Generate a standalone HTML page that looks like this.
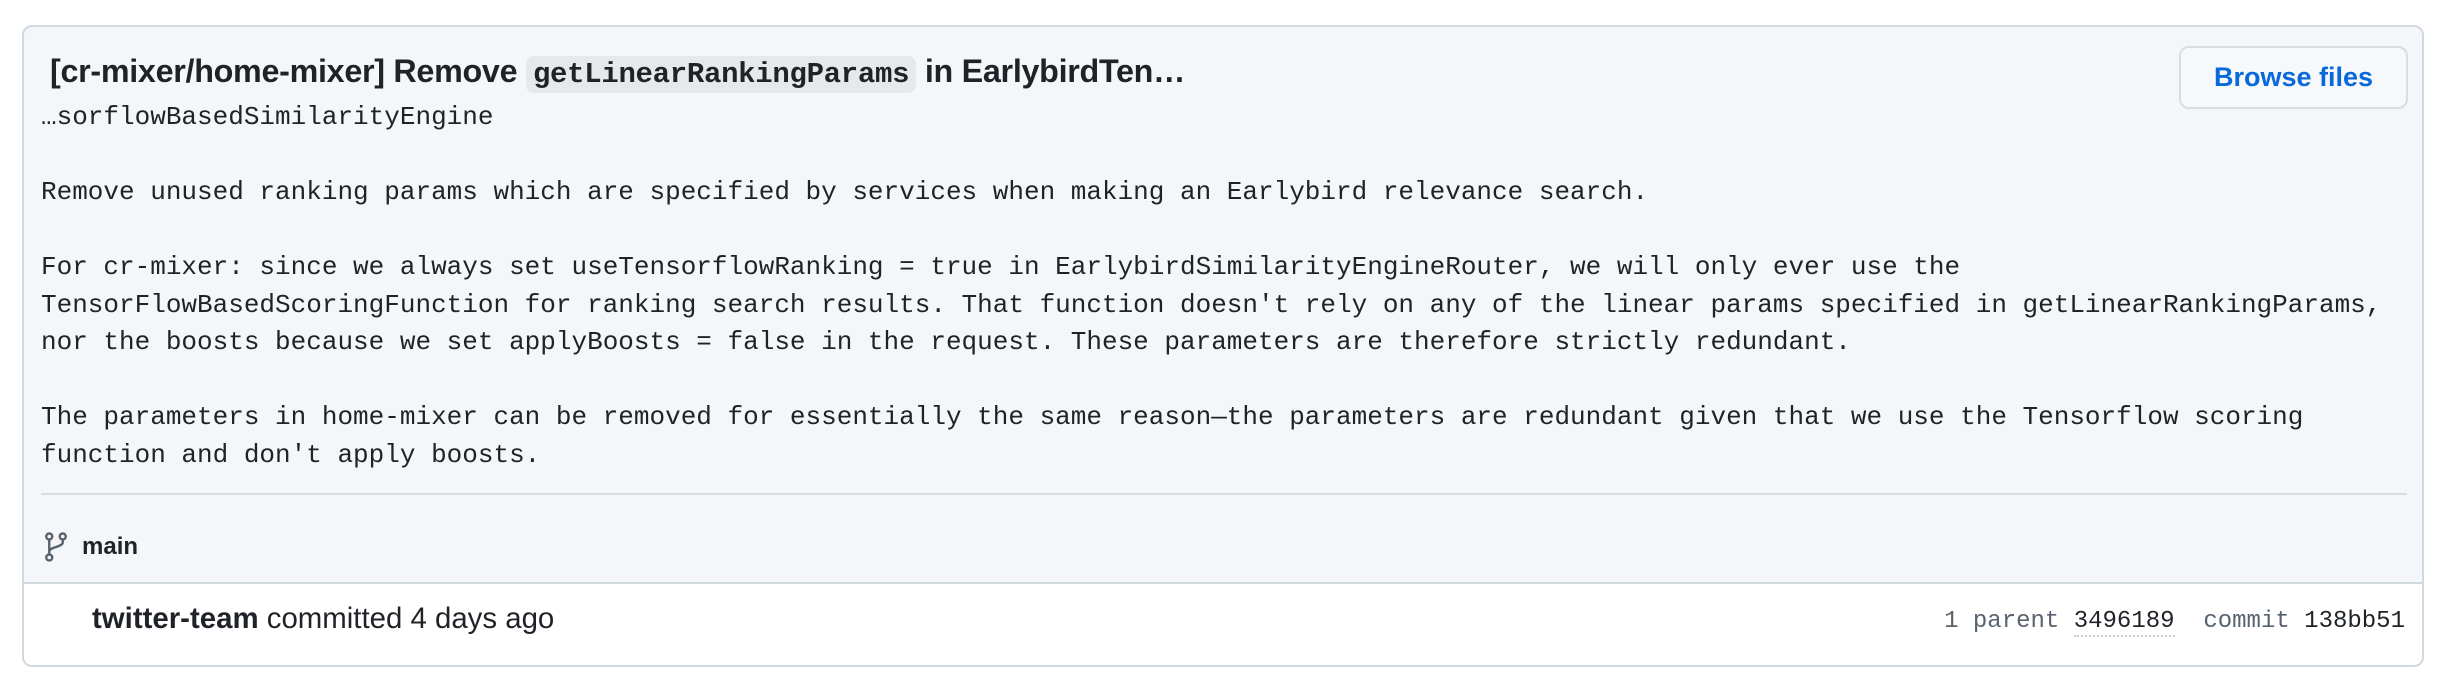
<!DOCTYPE html>
<html><head><meta charset="utf-8"><style>
body{margin:0;background:#fff;width:2444px;height:687px;position:relative;font-family:"Liberation Sans",sans-serif;color:#1f2328}
.card{position:absolute;left:22px;top:25px;width:2398px;height:638px;border:2px solid #d1d9e0;border-radius:10px;background:#f5f6f9;overflow:hidden}
.title{position:absolute;left:26px;top:22px;font-size:32.3px;font-weight:600;white-space:nowrap;letter-spacing:-0.3px;line-height:44px}
.code{font-family:"Liberation Mono",monospace;background:#e6e8ec;border-radius:8px;padding:2px 7px;font-size:29px;font-weight:700}
.btn{position:absolute;left:2155px;top:19px;width:225px;height:59px;border:2px solid #d8dde3;border-radius:10px;background:#f6f8fa;color:#0969da;font-size:27px;font-weight:600;text-align:center;line-height:59px}
pre{position:absolute;left:17px;top:72px;margin:0;font-family:"Liberation Mono",monospace;font-size:26px;line-height:37.5px;color:#1f2328}
.hr{position:absolute;left:17px;top:466px;width:2366px;height:2px;background:#d8dde3}
.branch{position:absolute;left:20px;top:505px;font-size:24px;font-weight:600;display:flex;align-items:center;gap:14px}
.foot{position:absolute;left:0;top:555px;width:2398px;height:83px;background:#fff;border-top:2px solid #d1d9e0}
.ft{position:absolute;left:68px;top:18px;font-size:29.4px}
.fr{position:absolute;right:17px;top:24px;font-family:"Liberation Mono",monospace;font-size:24px;color:#59636e}
.fr b{font-weight:400;color:#1f2328}
</style></head><body>
<div class="card">
<div class="title">[cr-mixer/home-mixer] Remove <span class="code">getLinearRankingParams</span> in EarlybirdTen…</div>
<div class="btn">Browse files</div>
<pre>…sorflowBasedSimilarityEngine

Remove unused ranking params which are specified by services when making an Earlybird relevance search.

For cr-mixer: since we always set useTensorflowRanking = true in EarlybirdSimilarityEngineRouter, we will only ever use the
TensorFlowBasedScoringFunction for ranking search results. That function doesn't rely on any of the linear params specified in getLinearRankingParams,
nor the boosts because we set applyBoosts = false in the request. These parameters are therefore strictly redundant.

The parameters in home-mixer can be removed for essentially the same reason—the parameters are redundant given that we use the Tensorflow scoring
function and don't apply boosts.</pre>
<div class="hr"></div>
<div class="branch"><svg width="24" height="30" viewBox="0 0 16 20" fill="none" stroke="#59636e" stroke-width="1.6"><circle cx="3.5" cy="3" r="2"/><circle cx="12.5" cy="3" r="2"/><circle cx="3.5" cy="17" r="2"/><path d="M3.5 5v10M12.5 5v2c0 3-9 3-9 6"/></svg><span>main</span></div>
<div class="foot">
<div class="ft"><b>twitter-team</b> committed 4 days ago</div>
<div class="fr">1 parent <b style="border-bottom:2px dotted #c8ccd1">3496189</b>&nbsp;&nbsp;commit <b>138bb51</b></div>
</div>
</div>
</body></html>
